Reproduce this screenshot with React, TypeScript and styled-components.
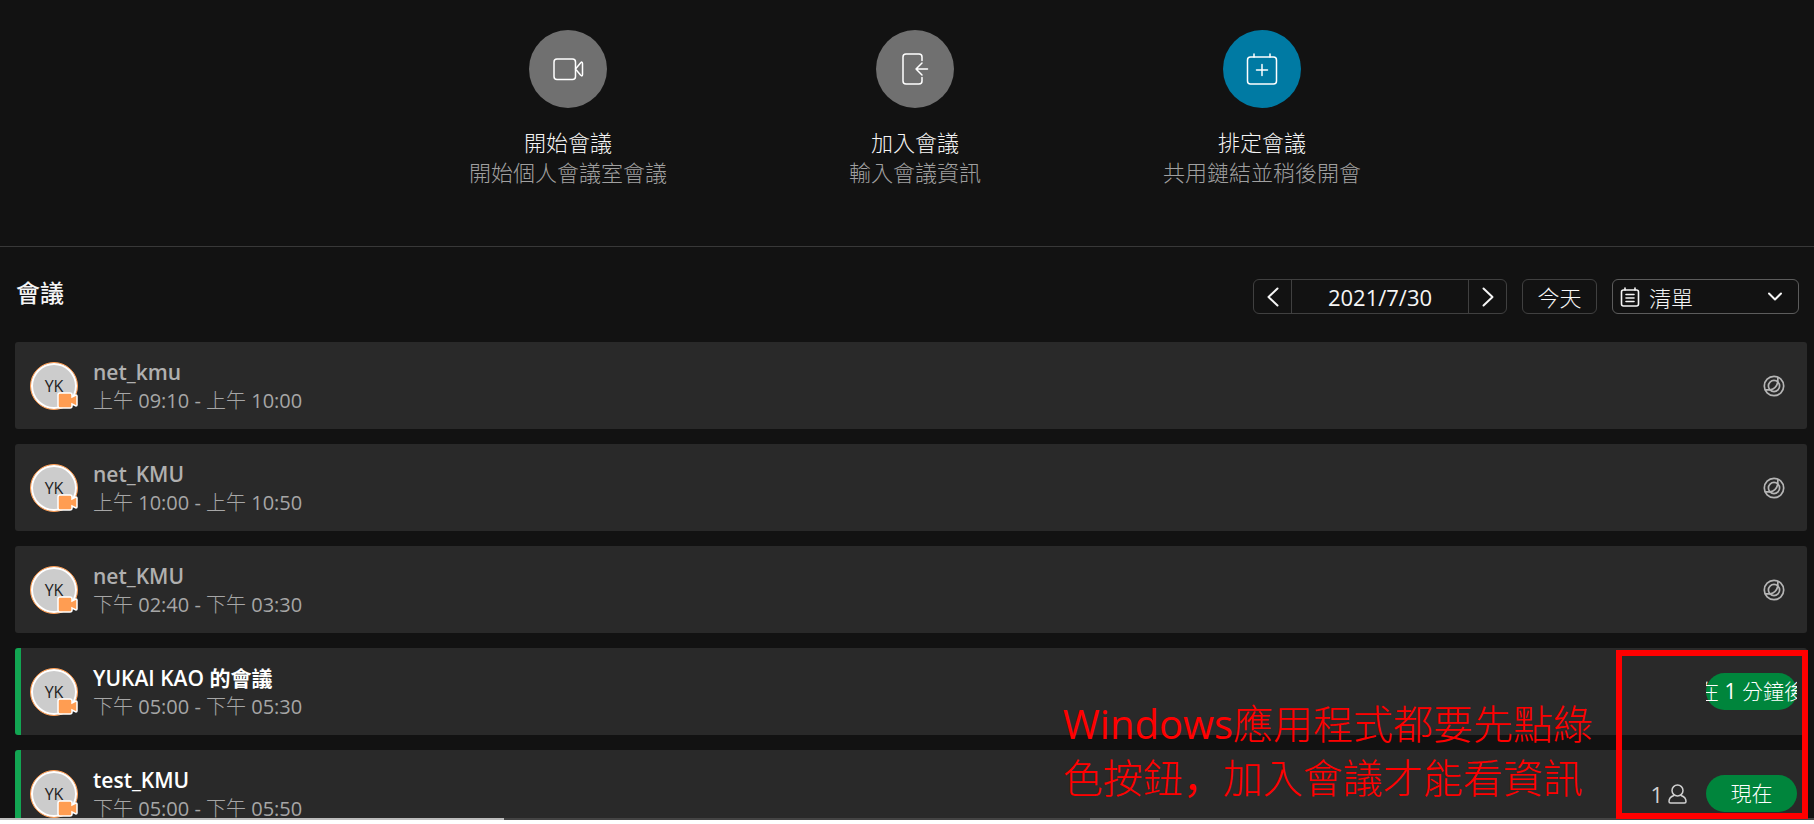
import React from "react";
import styled, { createGlobalStyle } from "styled-components";

const lightStack = `"Open Sans", "Noto Sans CJK TC Light", "Noto Sans CJK TC", sans-serif`;

const Global = createGlobalStyle`
  *, *::before, *::after { box-sizing: border-box; }
  html, body { margin: 0; background: #121212; }
  body, button, select {
    font-family: "Open Sans", "Noto Sans CJK TC", sans-serif;
    font-weight: 400;
  }
  button { padding: 0; border: 0; background: none; color: inherit; cursor: pointer; }
  h1, h2, p, ul { margin: 0; padding: 0; font-weight: inherit; }
  svg { display: block; }
`;

const Page = styled.div`
  position: relative;
  display: flex;
  flex-direction: column;
  height: 100vh;
  overflow: hidden;
  color: #f5f5f5;
`;

const Actions = styled.nav`
  display: flex;
  justify-content: center;
  flex: none;
  padding: 30px 0 59px 16px;
  border-bottom: 1px solid #383838;
`;

const Action = styled.div`
  display: flex;
  flex-direction: column;
  align-items: center;
  width: 347px;
  font-size: 22px;
  line-height: 30px;
  font-weight: 300;
`;

const RoundButton = styled.button<{ $primary?: boolean }>`
  display: flex;
  align-items: center;
  justify-content: center;
  width: 78px;
  height: 78px;
  margin-bottom: 19px;
  border-radius: 50%;
  color: #fff;
  background: ${(p) => (p.$primary ? "#007aa3" : "#707070")};
`;

const Hint = styled.p`
  color: #a0a0a0;
`;

const Toolbar = styled.header`
  display: flex;
  align-items: center;
  flex: none;
  gap: 15px;
  padding: 32px 15px 28px 16px;
`;

const Heading = styled.h1`
  flex: 1;
  margin-top: -8px;
  font-size: 24px;
  line-height: 34px;
  font-weight: 500;
`;

const Stepper = styled.div`
  display: flex;
  height: 35px;
  border: 1px solid #404040;
  border-radius: 6px;
`;

const Step = styled.button`
  display: flex;
  align-items: center;
  justify-content: center;
  width: 37px;
`;

const DateButton = styled.button`
  width: 178px;
  border: solid #404040;
  border-width: 0 1px;
  font-size: 22px;
  line-height: 34px;
`;

const Today = styled.button`
  width: 75px;
  height: 35px;
  border: 1px solid #404040;
  border-radius: 6px;
  font-size: 22px;
  line-height: 34px;
  font-weight: 300;
`;

const ViewPicker = styled.label`
  display: grid;
  align-items: center;
  width: 187px;
  height: 35px;
  padding: 0 16px 0 7px;
  border: 1px solid #5c5c5c;
  border-radius: 6px;
  grid-template-columns: 20px 1fr 14px;
`;

const Select = styled.select`
  grid-area: 1 / 1 / 2 / 4;
  width: 100%;
  height: 33px;
  padding: 2px 0 0 29px;
  border: 0;
  appearance: none;
  background: none;
  color: inherit;
  font-size: 22px;
  font-weight: 300;
`;

const PickerIcon = styled.span<{ $column: number }>`
  grid-row: 1;
  grid-column: ${(p) => p.$column};
  pointer-events: none;
`;

const List = styled.ul`
  display: flex;
  flex-direction: column;
  gap: 15px;
  padding: 0 7px 0 15px;
  list-style: none;
`;

const Card = styled.li<{ $active: boolean }>`
  display: flex;
  align-items: center;
  flex: none;
  height: 87px;
  padding: 0 10px 0 9px;
  border-left: 6px solid ${(p) => (p.$active ? "#12a552" : "#292929")};
  border-radius: 3px;
  background: #292929;
`;

const Avatar = styled.div`
  position: relative;
  display: flex;
  align-items: center;
  justify-content: center;
  width: 48px;
  height: 48px;
  border: 1px solid #ff9d52;
  border-radius: 50%;
  background: #ccc;
  box-shadow: inset 0 0 0 2px #fff;
  color: #222;
  font-size: 16px;
  line-height: 20px;
`;

const CameraBadge = styled.svg`
  position: absolute;
  right: -1px;
  bottom: 0;
`;

const Details = styled.div`
  flex: 1;
  margin-left: 15px;
`;

const Title = styled.h2<{ $active: boolean }>`
  font-size: 21px;
  line-height: 30px;
  font-weight: 600;
  color: ${(p) => (p.$active ? "#fff" : "#b0b0b0")};
`;

const Time = styled.p`
  font-family: ${lightStack};
  font-size: 20px;
  line-height: 28px;
  color: #a6a6a6;
`;

const Ended = styled.span`
  margin-right: 12px;
  color: #b5b5b5;
`;

const Attendees = styled.span`
  display: flex;
  align-items: center;
  gap: 5px;
  margin-right: 19px;
  font-size: 22px;
  line-height: 30px;
  color: #d0d0d0;
`;

const Join = styled.button`
  width: 91px;
  height: 37px;
  border-radius: 19px;
  background: #00853c;
  color: #fff;
  font-family: ${lightStack};
  font-size: 21px;
  line-height: 37px;
`;

const JoinText = styled.span`
  display: flex;
  justify-content: center;
  overflow: hidden;
  white-space: nowrap;
`;

const Callout = styled.aside`
  position: absolute;
  right: 6px;
  bottom: 5px;
  width: 192px;
  height: 169px;
  border: 6px solid #f00;
  pointer-events: none;
`;

const Note = styled.p`
  position: absolute;
  right: 221px;
  bottom: 20px;
  color: #f00;
  font-family: ${lightStack};
  font-size: 40px;
  line-height: 53px;
  white-space: nowrap;
`;

const Comma = styled.span`
  font-family: "Noto Sans CJK SC", sans-serif;
`;

const BottomBar = styled.div`
  position: absolute;
  left: 0;
  right: 0;
  bottom: 0;
  display: flex;
  height: 6px;
  border-bottom: 4px solid #fff;
  background: #444;
`;

const BarPart = styled.span<{ $width: number; $color: string }>`
  width: ${(p) => p.$width}px;
  background: ${(p) => p.$color};
`;

const meetings = [
  { title: "net_kmu", time: "上午 09:10 - 上午 10:00" },
  { title: "net_KMU", time: "上午 10:00 - 上午 10:50" },
  { title: "net_KMU", time: "下午 02:40 - 下午 03:30" },
  { title: "YUKAI KAO 的會議", time: "下午 05:00 - 下午 05:30", join: "在 1 分鐘後" },
  { title: "test_KMU", time: "下午 05:00 - 下午 05:50", join: "現在", people: 1 },
];

const stroke = { fill: "none", stroke: "currentColor", strokeLinecap: "round", strokeLinejoin: "round" } as const;

const VideoIcon = () => (
  <svg width="32" height="32" viewBox="0 0 32 32" {...stroke} strokeWidth="1.5">
    <rect x="2" y="6" width="21.5" height="20.5" rx="3" />
    <path d="M23.5 16l5-6q2-2 2 .5v11q0 2.500-2 .5z" />
  </svg>
);

const JoinIcon = () => (
  <svg width="32" height="32" viewBox="0 0 32 32" {...stroke} strokeWidth="1.5">
    <path d="M23 7.500V4a3 3 0 0 0-3-3H7a3 3 0 0 0-3 3v24a3 3 0 0 0 3 3h13a3 3 0 0 0 3-3v-3.500M28.500 16H17M23 10l-6 6 6 6" />
  </svg>
);

const ScheduleIcon = () => (
  <svg width="32" height="32" viewBox="0 0 32 32" {...stroke} strokeWidth="1.5">
    <rect x="1.500" y="4" width="29" height="27" rx="3" />
    <path d="M8 1v3M24 1v3M16 11.500v11M10.500 17h11" />
  </svg>
);

const ListIcon = () => (
  <svg width="20" height="20" viewBox="0 0 20 20" {...stroke} strokeWidth="1.6">
    <rect x="1.500" y="3" width="17" height="16" rx="2" />
    <path d="M5 1v2M15 1v2M6 7.500h8M6 11h8M6 14.500h8" />
  </svg>
);

const EndedIcon = () => (
  <svg width="22" height="22" viewBox="0 0 22 22" {...stroke} strokeWidth="1.7">
    <circle cx="11" cy="11" r="9.7" />
    <circle cx="11" cy="11" r="5.6" />
    <path d="M14.800 2.500v4.700c-1 4-4 7-7.600 7.600H2.500" />
  </svg>
);

const PersonIcon = () => (
  <svg width="19" height="20" viewBox="0 0 19 20" {...stroke} strokeWidth="1.5">
    <circle cx="9.500" cy="6.500" r="5.500" />
    <path d="M6 11.500C3 12.500 1 14.500 1 17.500Q1 19 2.500 19h14q1.500 0 1.500-1.500c0-3-2-5-5-6" />
  </svg>
);

const Chevron = ({ d, w, h }: { d: string; w: number; h: number }) => (
  <svg width={w} height={h} viewBox={`0 0 ${w} ${h}`} {...stroke} strokeWidth="2">
    <path d={d} />
  </svg>
);

export default function App() {
  return (
    <Page lang="zh-Hant">
      <Global />
      <Actions>
        <Action>
          <RoundButton aria-label="開始會議"><VideoIcon /></RoundButton>
          <p>開始會議</p>
          <Hint>開始個人會議室會議</Hint>
        </Action>
        <Action>
          <RoundButton aria-label="加入會議"><JoinIcon /></RoundButton>
          <p>加入會議</p>
          <Hint>輸入會議資訊</Hint>
        </Action>
        <Action>
          <RoundButton $primary aria-label="排定會議"><ScheduleIcon /></RoundButton>
          <p>排定會議</p>
          <Hint>共用鏈結並稍後開會</Hint>
        </Action>
      </Actions>

      <Toolbar>
        <Heading>會議</Heading>
        <Stepper>
          <Step aria-label="前一天"><Chevron w={12} h={20} d="M10.500 1.500L1.500 10l9 8.500" /></Step>
          <DateButton>2021/7/30</DateButton>
          <Step aria-label="後一天"><Chevron w={12} h={20} d="M1.500 1.500l9 8.500-9 8.500" /></Step>
        </Stepper>
        <Today>今天</Today>
        <ViewPicker>
          <Select defaultValue="list" aria-label="檢視">
            <option value="list">清單</option>
          </Select>
          <PickerIcon $column={1}><ListIcon /></PickerIcon>
          <PickerIcon $column={3}><Chevron w={14} h={10} d="M1 1.500l6 6 6-6" /></PickerIcon>
        </ViewPicker>
      </Toolbar>

      <List>
        {meetings.map((m, i) => (
          <Card key={i} $active={!!m.join}>
            <Avatar>
              YK
              <CameraBadge width="21" height="17" viewBox="0 0 21 17">
                <path d="M3 1h10q2 0 2 2v2l4-2q1 0 1 1v9q0 1-1 1l-4-2v2q0 2-2 2H3q-2 0-2-2V3q0-2 2-2z" fill="#ff9d52" stroke="#fff" strokeWidth="1.5" />
              </CameraBadge>
            </Avatar>
            <Details>
              <Title $active={!!m.join}>{m.title}</Title>
              <Time>{m.time}</Time>
            </Details>
            {m.people && <Attendees>{m.people}<PersonIcon /></Attendees>}
            {m.join ? <Join><JoinText>{m.join}</JoinText></Join> : <Ended><EndedIcon /></Ended>}
          </Card>
        ))}
      </List>

      <BottomBar>
        <BarPart $width={504} $color="#bdbdbd" />
        <BarPart $width={586} $color="#444" />
        <BarPart $width={70} $color="#6a6a6a" />
      </BottomBar>
      <Note>
        Windows應用程式都要先點綠<br />
        色按鈕<Comma lang="zh-Hans">，</Comma>加入會議才能看資訊
      </Note>
      <Callout />
    </Page>
  );
}
